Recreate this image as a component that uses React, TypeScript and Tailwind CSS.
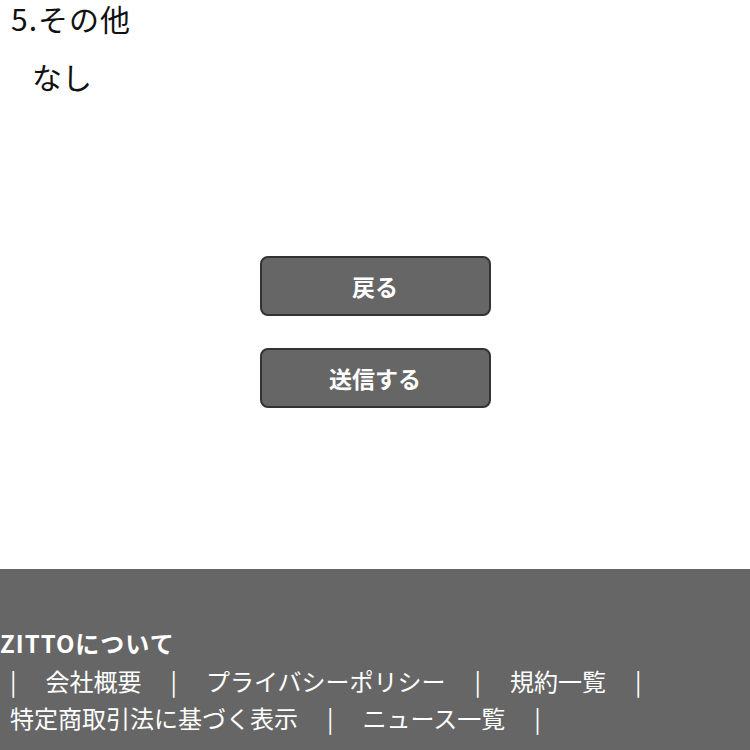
export default function App() {
  const links = ['会社概要', 'プライバシーポリシー', '規約一覧', '特定商取引法に基づく表示', 'ニュース一覧'];
  return (
    <div className="min-h-screen bg-white text-[#111]" style={{ fontFamily: '"Noto Sans CJK JP", "Noto Sans", sans-serif' }}>
      <h2 className="pl-[11px] text-[30px] leading-[36px] font-normal tracking-[1px]">5.その他</h2>
      <p className="mt-[22px] pl-[32px] text-[30px] leading-[36px]">なし</p>

      <div className="mt-[162px] flex flex-col items-center gap-[32px]">
        <button className="w-[231px] h-[60px] rounded-[8px] border-2 border-[#333] bg-[#666] text-white text-[23px] font-bold">
          戻る
        </button>
        <button className="w-[231px] h-[60px] rounded-[8px] border-2 border-[#333] bg-[#666] text-white text-[23px] font-bold">
          送信する
        </button>
      </div>

      <footer className="mt-[161px] bg-[#666] text-white pt-[59px] pb-[20px]">
        <p className="text-[24px] leading-[30px] font-bold tracking-[1px]">ZITTOについて</p>
        <ul className="mt-[4px] pl-[10px] flex flex-wrap items-center gap-x-[29px] text-[24px] leading-[37px]">
          <li>|</li>
          {links.map((l) => (
            <li key={l} className="contents">
              <span>{l}</span>
              <span>|</span>
            </li>
          ))}
        </ul>
      </footer>
    </div>
  );
}
